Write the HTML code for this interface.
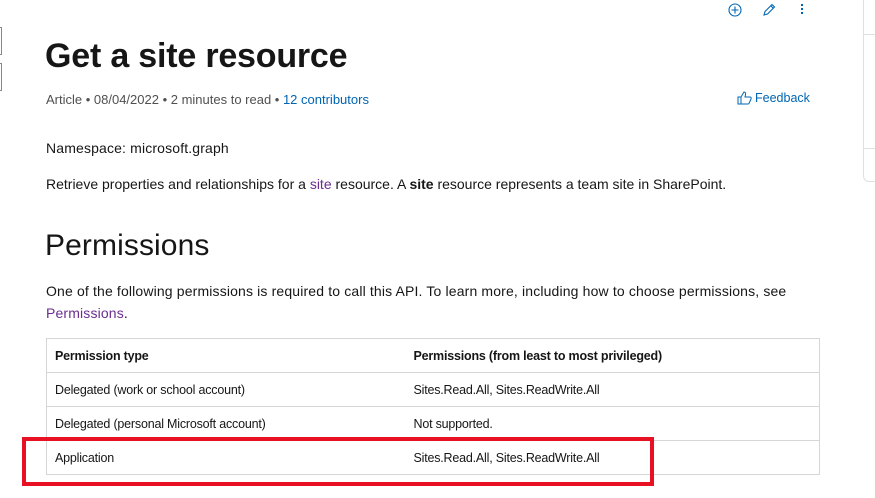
<!DOCTYPE html>
<html><head><meta charset="utf-8"><style>
*{margin:0;padding:0;box-sizing:border-box}
body{width:875px;height:498px;overflow:hidden;background:#fff;font-family:"Liberation Sans",sans-serif;color:#161616;position:relative}
.a{position:absolute;white-space:nowrap}
h1{position:absolute;left:45px;top:36px;font-size:34px;font-weight:600;letter-spacing:-0.2px;line-height:40px}
h2{position:absolute;left:45px;top:228px;font-size:30px;font-weight:400;letter-spacing:0.1px;line-height:36px}
.meta{left:46px;top:92px;font-size:13px;color:#505050;letter-spacing:0}
.p{font-size:14px;left:46px;letter-spacing:0.15px}
a{color:#0065b3;text-decoration:none}
table{position:absolute;left:46px;top:338px;width:774px;border-collapse:collapse;font-size:12.5px;letter-spacing:-0.2px}
td,th{border:1px solid #d6d6d6;height:34px;padding:0 8px;text-align:left}
th{font-weight:700}
td:first-child,th:first-child{width:359px;border-right:none}
td:last-child,th:last-child{border-left:none}
tr{border-top:1px solid #d6d6d6}
.red{position:absolute;left:22px;top:437px;width:632px;height:49px;border:4px solid #e81123}
.panel{position:absolute;left:863px;top:-2px;width:20px;height:184px;border:1px solid #e0e0e0;border-radius:0 0 0 6px}
</style></head><body>
<div class="a" style="left:0;top:27px;width:2px;height:28px;border:1px solid #888;border-left:none"></div>
<div class="a" style="left:0;top:63px;width:2px;height:28px;border:1px solid #888;border-left:none"></div>
<div class="panel"></div>
<div class="a" style="left:864px;top:34px;width:11px;height:1px;background:#e0e0e0"></div>
<div class="a" style="left:864px;top:148px;width:11px;height:1px;background:#e0e0e0"></div>
<svg class="a" style="left:728px;top:3px" width="14" height="14" viewBox="0 0 14 14"><circle cx="7" cy="7" r="6" fill="none" stroke="#0065b3" stroke-width="1.1"/><path d="M7 3.5v7M3.5 7h7" stroke="#0065b3" stroke-width="1.1"/></svg>
<svg class="a" style="left:762px;top:3px" width="14" height="14" viewBox="0 0 14 14"><path d="M2 12l1-3.5 7-7 2.5 2.5-7 7z M9 3l2.5 2.5" fill="none" stroke="#0065b3" stroke-width="1.1"/></svg>
<div class="a" style="left:801px;top:4px;width:2px;height:2px;background:#0065b3;box-shadow:0 4px 0 #0065b3,0 8px 0 #0065b3"></div>
<h1>Get a site resource</h1>
<div class="a meta">Article • 08/04/2022 • 2 minutes to read • <a>12 contributors</a></div>
<svg class="a" style="left:737px;top:91px" width="15" height="14" viewBox="0 0 15 14"><path d="M1 6h3v7H1z M4 6l3-5c1 0 2 1 1.5 2.5L8 6h5c1 0 1.5 1 1 2l-2 4.5c-.3.5-.7.5-1 .5H4" fill="none" stroke="#0065b3" stroke-width="1"/></svg>
<div class="a" style="left:755px;top:91px;font-size:12.5px;color:#0065b3">Feedback</div>
<div class="a p" style="top:140px">Namespace: microsoft.graph</div>
<div class="a p" style="top:176px;letter-spacing:0">Retrieve properties and relationships for a <a style="color:#6b2d90">site</a> resource. A <b>site</b> resource represents a team site in SharePoint.</div>
<h2>Permissions</h2>
<div class="a p" style="top:283px">One of the following permissions is required to call this API. To learn more, including how to choose permissions, see</div>
<div class="a p" style="top:305px"><a style="color:#6b2d90">Permissions</a>.</div>
<table>
<tr><th>Permission type</th><th>Permissions (from least to most privileged)</th></tr>
<tr><td>Delegated (work or school account)</td><td>Sites.Read.All, Sites.ReadWrite.All</td></tr>
<tr><td>Delegated (personal Microsoft account)</td><td>Not supported.</td></tr>
<tr><td>Application</td><td>Sites.Read.All, Sites.ReadWrite.All</td></tr>
</table>
<div class="red"></div>
</body></html>
